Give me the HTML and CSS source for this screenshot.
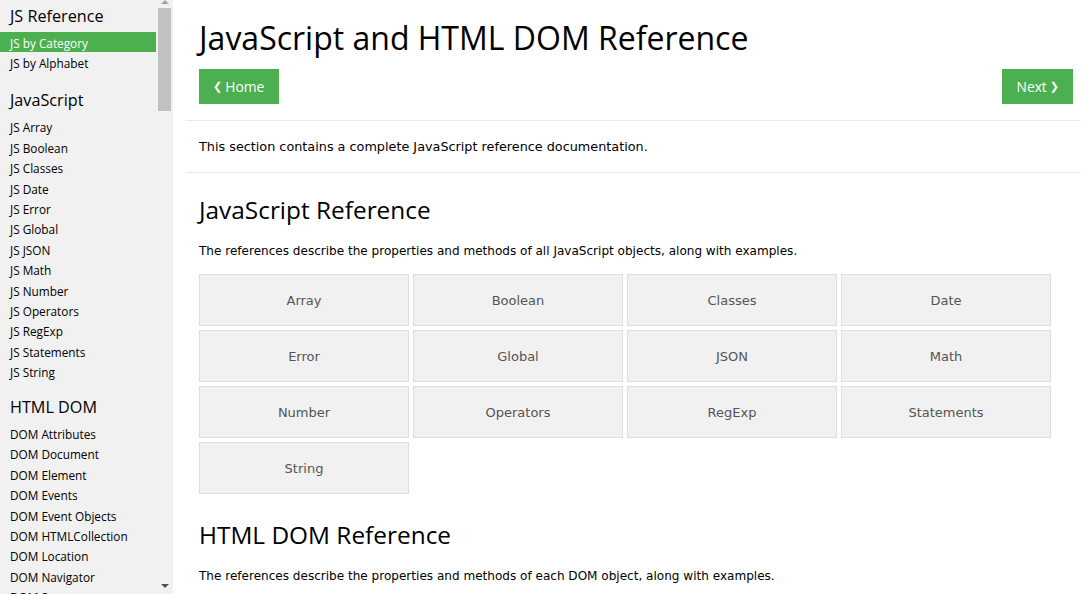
FILE: index.html
```html
<!DOCTYPE html>
<html lang="en">
<head>
<meta charset="utf-8">
<title>JavaScript and HTML DOM Reference</title>
<link rel="stylesheet" href="styles.css">
</head>
<body>
<nav class="sidebar">
  <div class="side-list">
    <h2 class="side-head first">JS Reference</h2>
    <a class="side-link active">JS by Category</a>
    <a class="side-link">JS by Alphabet</a>
    <h2 class="side-head js">JavaScript</h2>
    <a class="side-link">JS Array</a>
    <a class="side-link">JS Boolean</a>
    <a class="side-link">JS Classes</a>
    <a class="side-link">JS Date</a>
    <a class="side-link">JS Error</a>
    <a class="side-link">JS Global</a>
    <a class="side-link">JS JSON</a>
    <a class="side-link">JS Math</a>
    <a class="side-link">JS Number</a>
    <a class="side-link">JS Operators</a>
    <a class="side-link">JS RegExp</a>
    <a class="side-link">JS Statements</a>
    <a class="side-link">JS String</a>
    <h2 class="side-head dom">HTML DOM</h2>
    <a class="side-link">DOM Attributes</a>
    <a class="side-link">DOM Document</a>
    <a class="side-link">DOM Element</a>
    <a class="side-link">DOM Events</a>
    <a class="side-link">DOM Event Objects</a>
    <a class="side-link">DOM HTMLCollection</a>
    <a class="side-link">DOM Location</a>
    <a class="side-link">DOM Navigator</a>
    <a class="side-link">DOM Screen</a>
    <a class="side-link">DOM Style</a>
  </div>
  <div class="scrollbar">
    <span class="arrow-up"></span>
    <span class="thumb"></span>
    <span class="arrow-down"></span>
  </div>
</nav>
<main class="main">
  <section class="top">
    <h1 class="title">JavaScript and HTML DOM Reference</h1>
    <div class="nav-buttons">
      <a class="btn"><span class="chev">&#10094;</span> Home</a>
      <a class="btn">Next <span class="chev">&#10095;</span></a>
    </div>
  </section>
  <hr class="rule">
  <p class="intro">This section contains a complete JavaScript reference documentation.</p>
  <hr class="rule flush">
  <section class="block">
    <h2 class="sub">JavaScript Reference</h2>
    <p class="text">The references describe the properties and methods of all JavaScript objects, along with examples.</p>
    <div class="grid">
      <a class="cell">Array</a>
      <a class="cell">Boolean</a>
      <a class="cell">Classes</a>
      <a class="cell">Date</a>
      <a class="cell">Error</a>
      <a class="cell">Global</a>
      <a class="cell">JSON</a>
      <a class="cell">Math</a>
      <a class="cell">Number</a>
      <a class="cell">Operators</a>
      <a class="cell">RegExp</a>
      <a class="cell">Statements</a>
      <a class="cell">String</a>
    </div>
    <h2 class="sub second">HTML DOM Reference</h2>
    <p class="text">The references describe the properties and methods of each DOM object, along with examples.</p>
  </section>
</main>
</body>
</html>
```
FILE: styles.css
```css
html, body {
  margin: 0;
  padding: 0;
  height: 594px;
  overflow: hidden;
  background: #fff;
}
body {
  display: flex;
  font-family: "DejaVu Sans", Verdana, sans-serif;
  color: #000;
}
.sidebar {
  position: relative;
  width: 173px;
  flex: 0 0 173px;
  height: 594px;
  background: #f1f1f1;
  overflow: hidden;
}
.side-list {
  width: 156px;
  display: flex;
  flex-direction: column;
}
.side-head {
  margin: 0;
  padding-left: 10px;
  font-family: "Open Sans", "Noto Sans", sans-serif;
  font-weight: 400;
  font-size: 16.2px;
  color: #000;
}
.side-head.first {
  line-height: 32px;
  height: 32px;
}
.side-head.js {
  padding-top: 10.8px;
  line-height: 32.8px;
  height: 32.8px;
}
.side-head.dom {
  padding-top: 12px;
  line-height: 29.6px;
  height: 29.6px;
}
.side-link {
  display: block;
  padding: 2px 0 0 10px;
  font-family: "Open Sans", "Noto Sans", sans-serif;
  font-size: 11.8px;
  line-height: 18.4px;
  height: 18.4px;
  color: #000;
  white-space: nowrap;
}
.side-link.active {
  background: #4caf50;
  color: #fff;
}
.scrollbar {
  position: absolute;
  top: 0;
  right: 0;
  width: 17px;
  height: 594px;
}
.thumb {
  position: absolute;
  left: 2px;
  top: 8px;
  width: 13px;
  height: 103px;
  background: #c1c1c1;
}
.arrow-up, .arrow-down {
  position: absolute;
  left: 5px;
  width: 0;
  height: 0;
  border-left: 4px solid transparent;
  border-right: 4px solid transparent;
}
.arrow-up {
  top: 0;
  border-bottom: 4px solid #a3a3a3;
}
.arrow-down {
  top: 584px;
  border-top: 4px solid #505050;
}
.main {
  flex: 1;
  margin-left: 13px;
}
.top {
  padding: 0 8px 0 13px;
}
.title {
  margin: 0;
  padding-top: 17px;
  font-family: "Open Sans", "Noto Sans", sans-serif;
  font-weight: 400;
  font-size: 32px;
  line-height: 42px;
  height: 42px;
  color: #000;
}
.nav-buttons {
  display: flex;
  justify-content: space-between;
  margin-top: 10px;
}
.btn {
  display: inline-flex;
  align-items: center;
  height: 35px;
  padding: 0 15px 0 14px;
  background: #4caf50;
  color: #fff;
  font-family: "Open Sans", "Noto Sans", sans-serif;
  font-size: 13.8px;
  gap: 3px;
}
.btn + .btn {
  padding: 0 14px 0 15px;
}
.chev {
  font-family: "DejaVu Sans", sans-serif;
  font-weight: 700;
  font-size: 11px;
}
.rule {
  margin: 16px 0 0 0;
  border: 0;
  border-top: 1px solid #e8e8e8;
  height: 0;
}
.rule.flush {
  margin-top: 0;
}
.intro {
  margin: 0;
  padding: 17px 0 16px 13px;
  font-size: 12.8px;
  line-height: 18px;
  color: #000;
}
.block {
  padding-left: 13px;
}
.text {
  margin: 16px 0 0 0;
  font-size: 12.05px;
  line-height: 18px;
  color: #000;
}
.sub {
  margin: 0;
  padding-top: 21px;
  font-family: "Open Sans", "Noto Sans", sans-serif;
  font-weight: 400;
  font-size: 24.4px;
  line-height: 32px;
  height: 32px;
  color: #000;
}
.grid {
  display: grid;
  grid-template-columns: repeat(4, 210px);
  grid-auto-rows: 52px;
  gap: 4px;
  margin-top: 14px;
}
.cell {
  display: flex;
  align-items: center;
  justify-content: center;
  background: #f1f1f1;
  border: 1px solid #dedede;
  color: #555;
  font-size: 13px;
}
.sub.second {
  padding-top: 25px;
}
```
